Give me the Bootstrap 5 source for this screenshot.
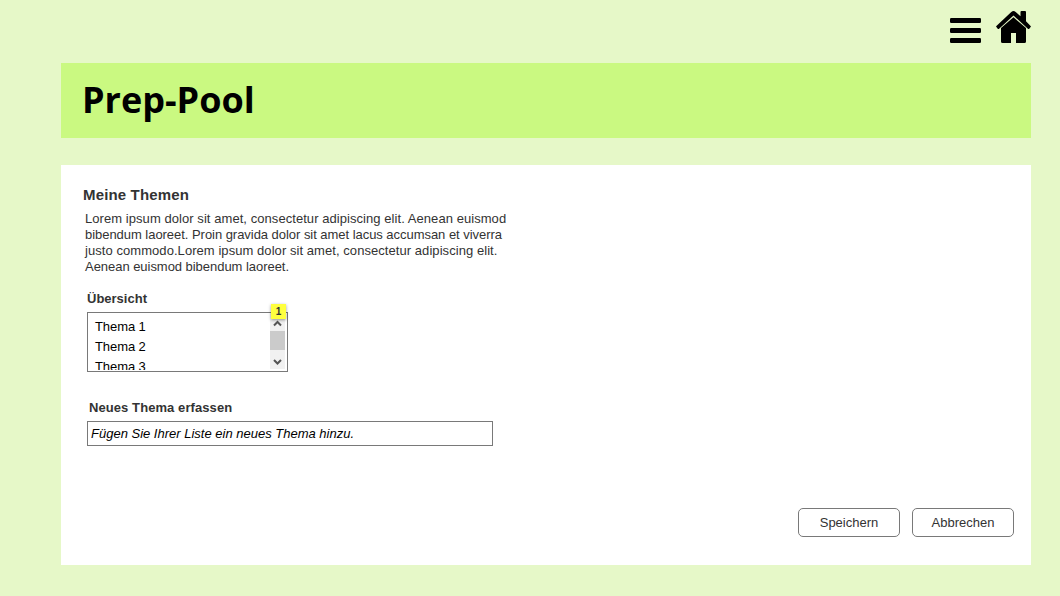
<!DOCTYPE html>
<html lang="de">
<head>
<meta charset="utf-8">
<meta name="viewport" content="width=device-width, initial-scale=1">
<title>Prep-Pool</title>
<link href="https://cdn.jsdelivr.net/npm/bootstrap@5.3.0/dist/css/bootstrap.min.css" rel="stylesheet">
<style>
body{background:#e6f8c8;font-family:"Liberation Sans",Arial,sans-serif;font-size:13px;line-height:16px;color:#333;height:596px;overflow:hidden}
.page{padding:0 29px 0 61px}
.topbar{height:63px;padding-top:10px}
.topbar a{color:#000;line-height:0}
.menu-link{margin:7px 14px 0 0}
.banner{background:#caf981;height:75px;padding-left:21px}
.banner h1{font:700 36px/49px "Open Sans",sans-serif;color:#000;padding-bottom:2px}
.panel{height:400px;margin-top:27px;padding:20px 17px 28px 22px}
.panel h2{font-size:15px;line-height:20px;font-weight:700;letter-spacing:.15px}
.intro{margin:6px 0 0 2px;white-space:nowrap}
.wide{letter-spacing:.06px}
.tight{letter-spacing:-.04px}
.label-a{margin:16px 0 0 4px;font-weight:700}
.label-b{margin:28px 0 0 6px;font-weight:700;letter-spacing:.08px}
.topics{width:201px;height:60px;margin:5px 0 0 4px;border:1px solid #797979;color:#000}
.topics ul{padding:4px 0 0 7px;line-height:20px;letter-spacing:-.08px;overflow:hidden;margin-bottom:1px}
.scroller{width:15px;margin:0 2px 2px 0;background:#f1f1f1}
.thumb{height:19px;background:#cbcbcb}
.arrow{height:18px;line-height:0}
.note{top:-9px;right:1px;width:15px;height:15px;background:#ffff3e;box-shadow:0 1px 3px rgba(0,0,0,.4);font-size:10px;line-height:15px;font-weight:700;color:#333}
.entry{width:406px;height:25px;margin:5px 0 0 4px;padding:0 3px;border:1px solid #797979;font-style:italic;color:#000;background:#fff}
.entry::placeholder{color:#000;opacity:1}
.actions{gap:12px}
.actions .btn{width:102px;height:29px;padding:0;border:1px solid #797979;border-radius:5px;font-size:13px;line-height:27px;color:#333;background:#fff}
</style>
</head>
<body>
<div class="page">
  <nav class="topbar d-flex justify-content-end align-items-start">
    <a href="#" class="menu-link" aria-label="Menü"><svg width="32" height="27" viewBox="0 0 32 27" fill="currentColor"><rect x="0" y="1" width="31" height="5" rx="1.2"/><rect x="0" y="11" width="31" height="5" rx="1.2"/><rect x="0" y="21" width="31" height="5" rx="1.2"/></svg></a>
    <a href="#" aria-label="Startseite"><svg width="35" height="34" viewBox="0 0 35 34" fill="currentColor"><path d="M17.500 7.300 30 18V31.500Q30 33 28.500 33H20V23H15V33H6.500Q5 33 5 31.500V18Z"/><path d="M.4 15.900 15.300 2Q17.500.2 19.700 2L24.500 6.300V2Q24.500 1 25.500 1H29Q30 1 30 2V11.300L34.600 15.900Q35.200 16.500 34.600 17.100L33.300 18.700Q32.600 19.300 31.900 18.700L17.500 5.500 3.100 18.700Q2.400 19.300 1.700 18.700L.4 17.100Q-.2 16.500.4 15.900Z"/></svg></a>
  </nav>
  <header class="banner d-flex align-items-center"><h1 class="mb-0">Prep-Pool</h1></header>
  <main class="panel bg-white d-flex flex-column">
    <h2 class="mb-0">Meine Themen</h2>
    <p class="intro mb-0"><span class="wide">Lorem ipsum dolor sit amet, consectetur adipiscing elit. Aenean euismod</span><br><span class="tight">bibendum laoreet. Proin gravida dolor sit amet lacus accumsan et viverra</span><br><span class="wide">justo commodo.Lorem ipsum dolor sit amet, consectetur adipiscing elit.</span><br><span class="tight">Aenean euismod bibendum laoreet.</span></p>
    <div class="label-a">Übersicht</div>
    <div class="topics position-relative d-flex">
      <ul class="list-unstyled flex-grow-1"><li>Thema 1</li><li>Thema 2</li><li>Thema 3</li></ul>
      <div class="scroller d-flex flex-column">
        <div class="arrow"><svg width="15" height="18" fill="none" stroke="#555" stroke-width="2"><path d="m4 12.500 3.500-3.500 3.500 3.500"/></svg></div>
        <div class="thumb"></div>
        <div class="arrow"><svg width="15" height="18" fill="none" stroke="#555" stroke-width="2"><path d="m4 10 3.500 3.500L11 10"/></svg></div>
      </div>
      <span class="note position-absolute text-center">1</span>
    </div>
    <label class="label-b" for="topic">Neues Thema erfassen</label>
    <input class="entry" id="topic" type="text" placeholder="Fügen Sie Ihrer Liste ein neues Thema hinzu.">
    <div class="actions d-flex justify-content-end mt-auto"><button class="btn" type="button">Speichern</button><button class="btn" type="button">Abbrechen</button></div>
  </main>
</div>
<script src="https://cdn.jsdelivr.net/npm/bootstrap@5.3.0/dist/js/bootstrap.bundle.min.js"></script>
</body>
</html>
